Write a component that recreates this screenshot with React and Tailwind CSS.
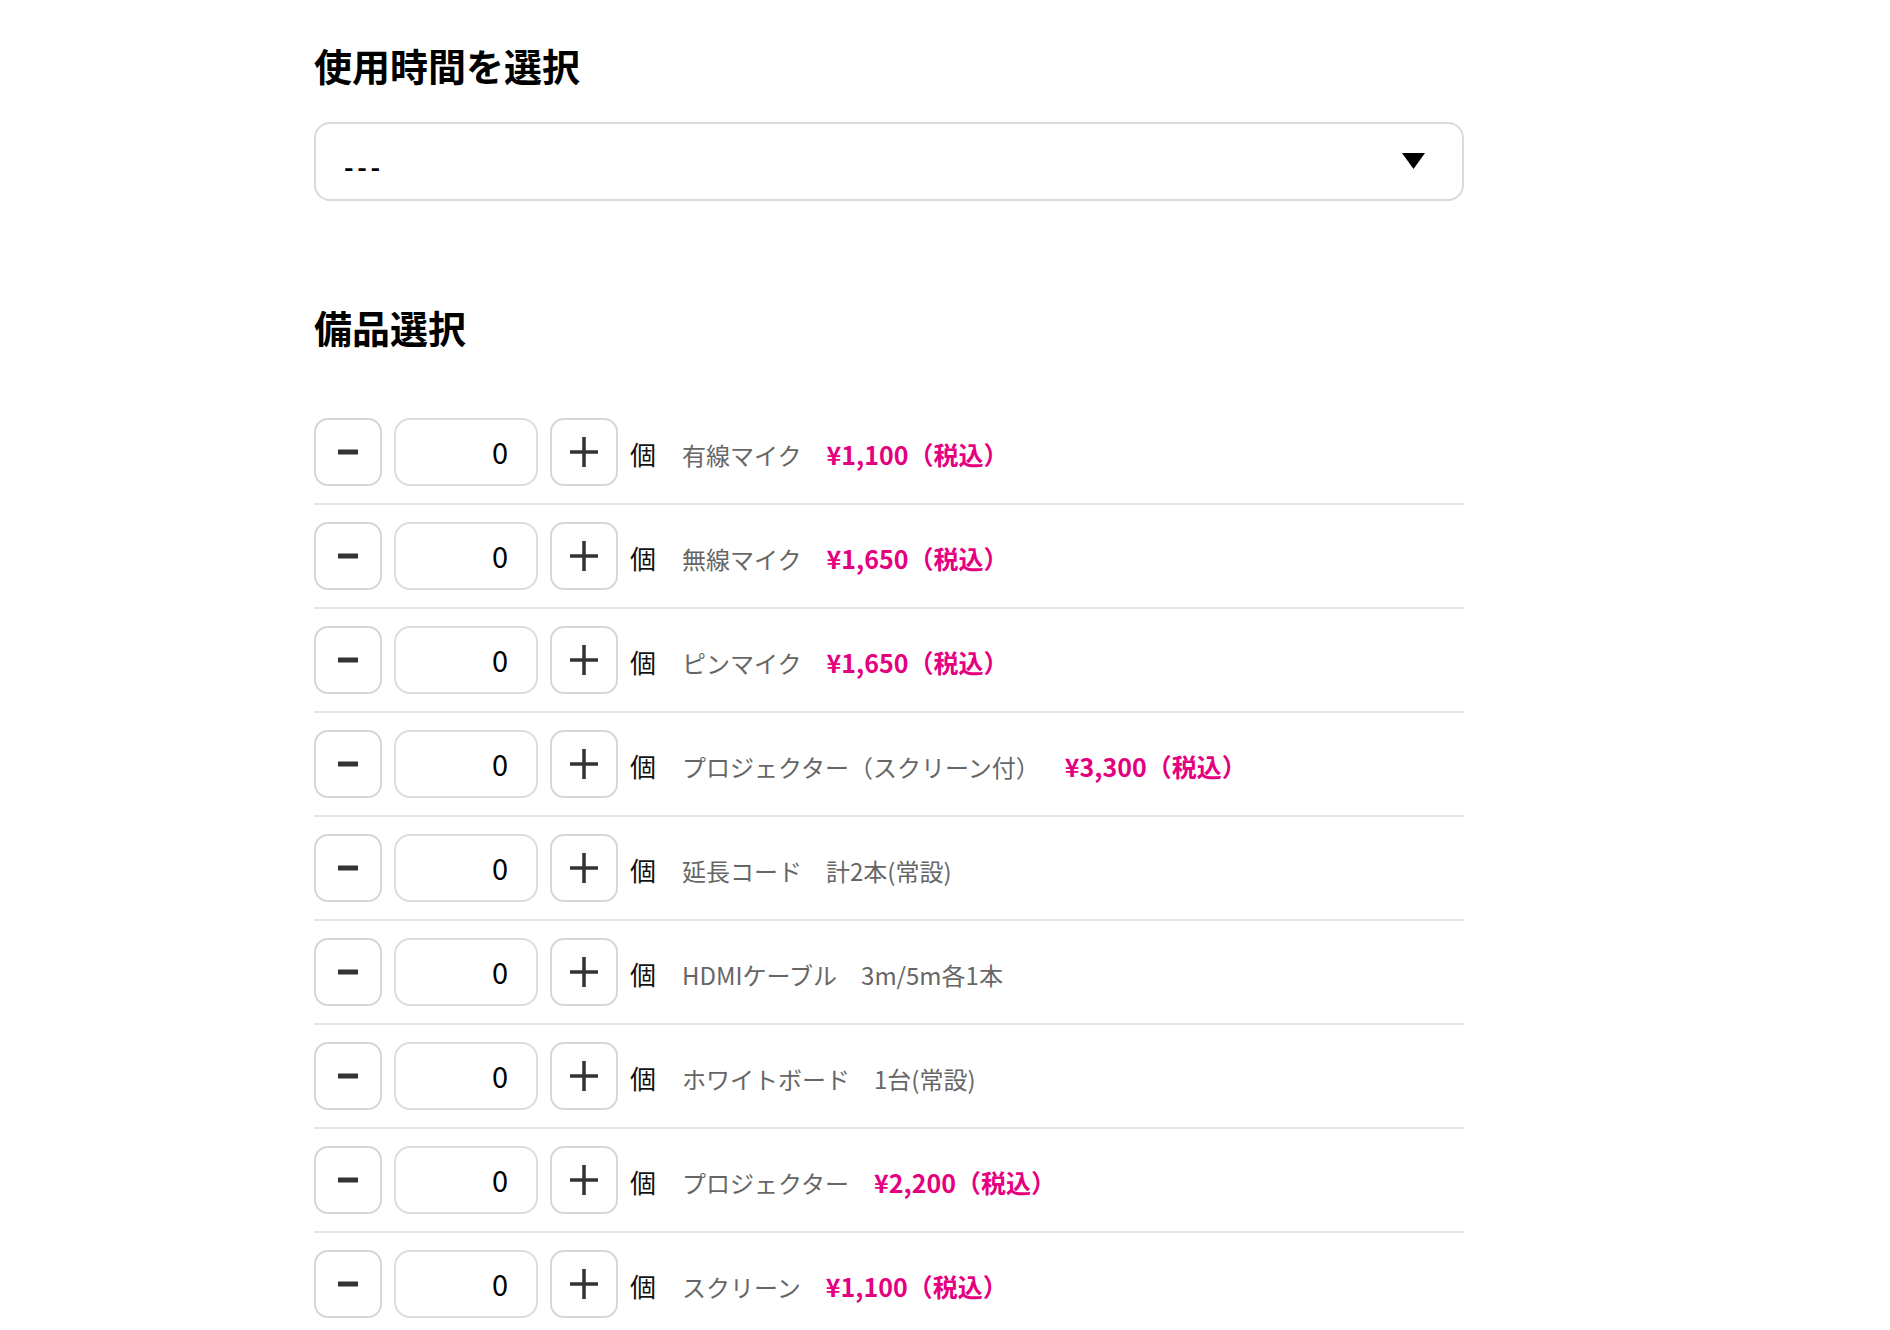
import React, { useState } from 'react';

const equipment = [
  { id: 1, name: '有線マイク', price: '¥1,100（税込）' },
  { id: 2, name: '無線マイク', price: '¥1,650（税込）' },
  { id: 3, name: 'ピンマイク', price: '¥1,650（税込）' },
  { id: 4, name: 'プロジェクター（スクリーン付）', price: '¥3,300（税込）' },
  { id: 5, name: '延長コード　計2本(常設)' },
  { id: 6, name: 'HDMIケーブル　3m/5m各1本' },
  { id: 7, name: 'ホワイトボード　1台(常設)' },
  { id: 8, name: 'プロジェクター', price: '¥2,200（税込）' },
  { id: 9, name: 'スクリーン', price: '¥1,100（税込）' },
];

const MinusIcon = () => (
  <svg width="20" height="6" viewBox="0 0 20 6">
    <rect x="0" y="0.5" width="20" height="5" fill="#333" />
  </svg>
);

const PlusIcon = () => (
  <svg width="28" height="30" viewBox="0 0 28 30">
    <rect x="0" y="13.25" width="28" height="3.5" fill="#333" />
    <rect x="12.25" y="0" width="3.5" height="30" fill="#333" />
  </svg>
);

const EquipmentRow = ({ item, count, onChange }) => (
  <li className="flex h-[104px] items-center border-b-2 border-[#e5e5ea]">
    <button
      type="button"
      onClick={() => onChange(Math.max(0, count - 1))}
      className="flex h-[68px] w-[68px] items-center justify-center rounded-[14px] border-2 border-[#d6d6dc] bg-white"
    >
      <MinusIcon />
    </button>
    <input
      type="text"
      inputMode="numeric"
      value={count}
      onChange={(e) => onChange(parseInt(e.target.value, 10) || 0)}
      className="ml-3 h-[68px] w-[144px] rounded-[16px] border-2 border-[#dcdcdf] bg-white pb-[3px] pr-[28px] text-right text-[29px] text-black outline-none"
    />
    <button
      type="button"
      onClick={() => onChange(count + 1)}
      className="ml-3 flex h-[68px] w-[68px] items-center justify-center rounded-[14px] border-2 border-[#d6d6dc] bg-white"
    >
      <PlusIcon />
    </button>
    <span className="ml-3 mt-[2px] text-[26px] text-[#111]">個</span>
    <span className="ml-[26px] mt-[6px] text-[24px] text-[#666]">{item.name}</span>
    {item.price && (
      <span className="ml-[25px] mt-[6px] text-[25px] font-semibold text-[#e4007f]">{item.price}</span>
    )}
  </li>
);

const App = () => {
  const [counts, setCounts] = useState(() =>
    Object.fromEntries(equipment.map((item) => [item.id, 0]))
  );

  const setCount = (id, value) => setCounts((prev) => ({ ...prev, [id]: value }));

  return (
    <div
      className="min-h-[1330px] bg-white pl-[314px] pt-[42px]"
      style={{ fontFamily: '"Noto Sans CJK JP", "Noto Sans", sans-serif' }}
    >
      <div className="w-[1150px]">
        <h2 className="text-[38px] font-bold leading-[1.2] text-black">使用時間を選択</h2>

        <div className="mt-[34px] flex h-[79px] items-center justify-between rounded-[16px] border-2 border-[#dadada] pl-[28px] pr-[37px]">
          <span className="mt-[8px] text-[26px] font-bold tracking-[0.14em] text-black">---</span>
          <svg width="23" height="16" viewBox="0 0 23 16">
            <path d="M0 0 H23 L11.5 16 Z" fill="#000" />
          </svg>
        </div>

        <h2 className="mt-[103px] text-[38px] font-bold leading-[1.2] text-black">備品選択</h2>

        <ul className="mt-[52px]">
          {equipment.map((item) => (
            <EquipmentRow
              key={item.id}
              item={item}
              count={counts[item.id]}
              onChange={(value) => setCount(item.id, value)}
            />
          ))}
        </ul>
      </div>
    </div>
  );
};

export default App;
